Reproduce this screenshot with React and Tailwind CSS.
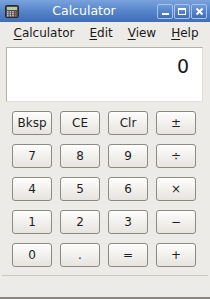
import React from 'react';

const KEYS = [
  ['Bksp', 'CE', 'Clr', '±'],
  ['7', '8', '9', '÷'],
  ['4', '5', '6', '×'],
  ['1', '2', '3', '−'],
  ['0', '.', '=', '+'],
];

const MENU = [
  { key: 'C', rest: 'alculator' },
  { key: 'E', rest: 'dit' },
  { key: 'V', rest: 'iew' },
  { key: 'H', rest: 'elp' },
];

const CalcIcon = () => (
  <svg width="14" height="13" viewBox="0 0 14 13">
    <rect x="0.5" y="0.5" width="13" height="12" rx="1" fill="#4b4b4b" stroke="#2a2a2a" />
    <rect x="2" y="2" width="10" height="3" fill="#b9c9a6" />
    {[0, 1, 2, 3].map(c =>
      [0, 1, 2].map(r => (
        <rect key={`${c}-${r}`} x={2 + c * 2.6} y={6.2 + r * 2} width="1.6" height="1.2" fill={c === 3 ? '#d76a4a' : '#e6e6e6'} />
      ))
    )}
  </svg>
);

const WinButton = ({ children }) => (
  <div className="w-[16px] h-[15px] rounded-[2px] border border-[#a9c2ea] bg-gradient-to-b from-[#6f9ad9] to-[#3e6cb6] flex items-center justify-center">
    {children}
  </div>
);

export default function App() {
  return (
    <div
      className="w-[210px] h-[299px] bg-[#edebe7] flex flex-col overflow-hidden"
      style={{ fontFamily: '"DejaVu Sans", Verdana, sans-serif' }}
    >
      {/* title bar */}
      <div className="h-[22px] shrink-0 bg-gradient-to-b from-[#7aa2dc] via-[#5785cb] to-[#3f6db6] flex items-center pl-[5px] pr-[3px]">
        <CalcIcon />
        <div className="flex-1 text-center text-white text-[12.5px] leading-none pr-[8px]">Calculator</div>
        <div className="flex gap-[1px]">
          <WinButton>
            <div className="w-[7px] h-[2px] bg-white mt-[6px]" />
          </WinButton>
          <WinButton>
            <div className="w-[8px] h-[7px] border border-white border-t-2" />
          </WinButton>
          <WinButton>
            <svg width="9" height="9" viewBox="0 0 9 9">
              <path d="M1.5 1.5 L7.5 7.5 M7.5 1.5 L1.5 7.5" stroke="white" strokeWidth="2" />
            </svg>
          </WinButton>
        </div>
      </div>

      {/* menu bar */}
      <div className="h-[22px] shrink-0 flex items-center pl-[6px] text-[12px] text-[#1a1a1a]">
        {MENU.map(m => (
          <span key={m.key} className="px-[7.5px] leading-none">
            <span className="underline underline-offset-2">{m.key}</span>
            {m.rest}
          </span>
        ))}
      </div>

      {/* display */}
      <div className="mt-[3px] ml-[6px] mr-[7px] h-[55px] shrink-0 bg-white border border-[#b4b0a9] border-r-[#e2dfda] border-b-[#e2dfda] flex justify-end pt-[9px] pr-[13px]">
        <span className="text-[19px] leading-none text-[#1a1a1a]">0</span>
      </div>

      {/* keypad */}
      <div className="mt-[9px] ml-[12px] grid grid-cols-[40px_40px_40px_40px] gap-x-[8px] gap-y-[9px]">
        {KEYS.flat().map(k => (
          <div
            key={k}
            className="h-[24px] rounded-[3px] border border-[#8d8a84] bg-gradient-to-b from-[#fdfdfc] to-[#e7e4df] shadow-[inset_0_1px_0_#ffffff] flex items-center justify-center text-[12px] text-[#1e1e1e] leading-none"
          >
            {k}
          </div>
        ))}
      </div>

      {/* status bar */}
      <div className="mt-[8px] mx-[2px] border-t border-[#c9c5bf] flex-1" />
      <div className="h-[2px] shrink-0 bg-[#8a8782]" />
    </div>
  );
}
